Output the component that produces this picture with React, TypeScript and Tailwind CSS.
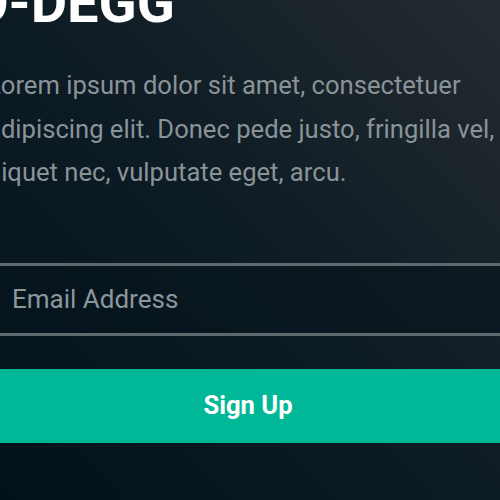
import React from "react";

export default function App() {
  return (
    <div
      className="w-[500px] h-[500px] overflow-hidden bg-linear-to-bl from-[#242b30] via-[#0d1b24] to-[#03111a]"
      style={{ fontFamily: "Roboto, 'Noto Sans', sans-serif" }}
    >
      <div className="ml-[-13px] w-[522px] flex flex-col">
        <h1 className="mt-[-25px] ml-[-17px] text-[56px] leading-none font-bold text-white whitespace-nowrap">
          O-DEGG
        </h1>
        <p className="mt-[33px] text-[25.6px] leading-[1.7] text-[#8a9398] whitespace-nowrap">
          <span className="block">Lorem ipsum dolor sit amet, consectetuer</span>
          <span className="block">adipiscing elit. Donec pede justo, fringilla vel,</span>
          <span className="block ml-[-6px]">aliquet nec, vulputate eget, arcu.</span>
        </p>
        <div className="mt-[68px] h-[73px] border-y-[3px] border-[#5f6a6f] bg-[#06141c]/60 flex items-center pl-[25px]">
          <input
            type="email"
            placeholder="Email Address"
            className="w-full bg-transparent outline-none text-[26px] text-[#8b979b] placeholder:text-[#8b979b]"
          />
        </div>
        <button className="mt-[33px] h-[74px] bg-[#00b797] text-white text-[25.6px] font-bold flex items-center justify-center">
          Sign Up
        </button>
      </div>
    </div>
  );
}
